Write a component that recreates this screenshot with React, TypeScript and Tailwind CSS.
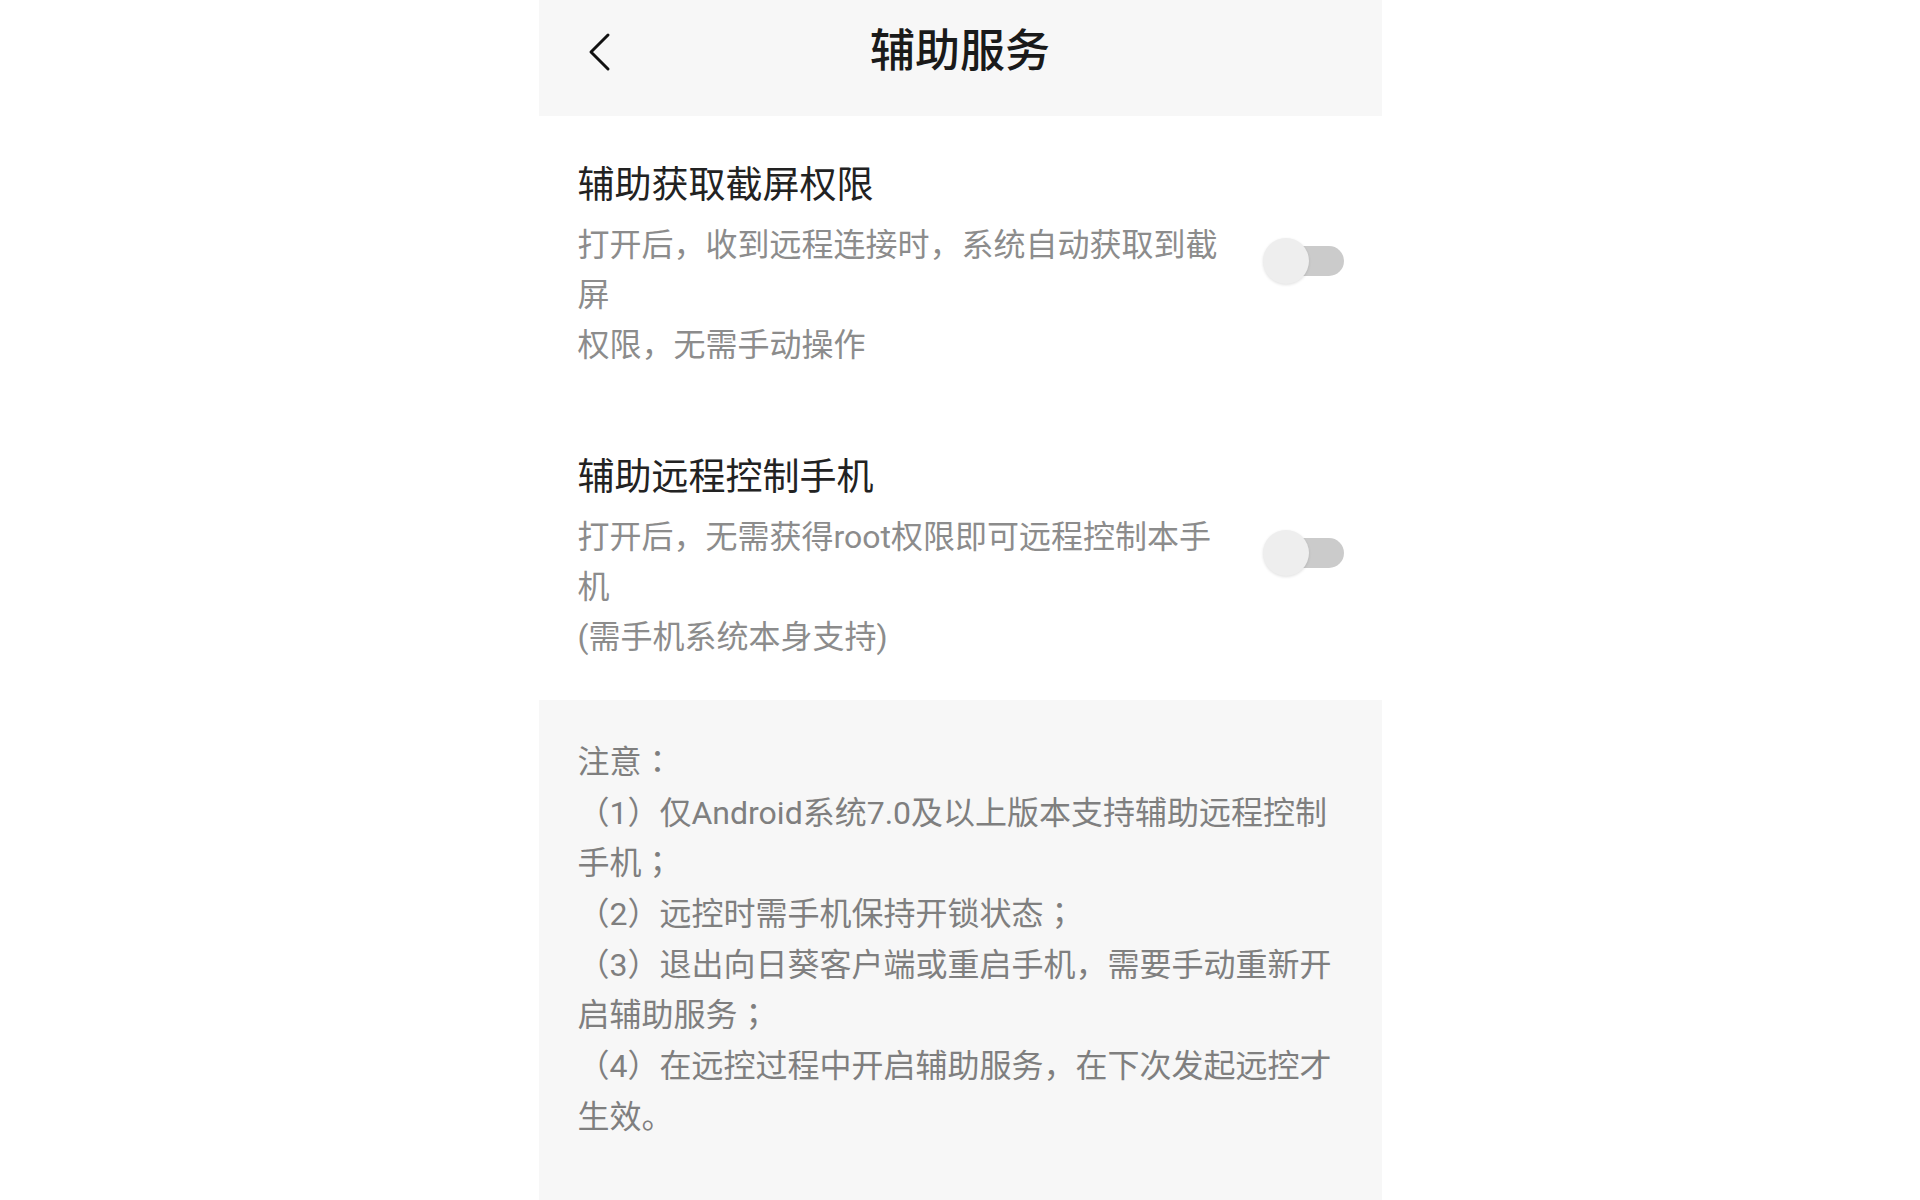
import React from "react";

// fullwidth colon / semicolon are drawn centred in their cell
function Punct({ text }: { text: string }) {
  const parts = text.split(/([：；])/);
  return (
    <>
      {parts.map((p, i) =>
        p === "：" || p === "；" ? (
          <span key={i} className="font-['Noto_Sans_CJK_JP',sans-serif] leading-none">{p}</span>
        ) : (
          <React.Fragment key={i}>{p}</React.Fragment>
        )
      )}
    </>
  );
}

function Toggle() {
  return (
    <div className="relative w-[81px] h-[46px] shrink-0 mb-[10px]">
      <div className="absolute right-0 top-[8px] h-[30px] w-[66px] rounded-full bg-[#cbcbcb]" />
      <div className="absolute left-0 top-0 h-[46px] w-[46px] rounded-full bg-[#eeeeee] shadow-[0_1px_3px_rgba(0,0,0,0.12)]" />
    </div>
  );
}

function SettingRow({ title, lines, className }: { title: string; lines: string[]; className: string }) {
  return (
    <div className={`flex items-center justify-between pl-[39px] pr-[38px] ${className}`}>
      <div className="flex flex-col">
        <div className="text-[37px] leading-[48px] text-[#222222]">{title}</div>
        <div className="mt-[10px] text-[32px] leading-[50px] text-[#8c8c8c]">
          {lines.map((l, i) => (
            <div key={i} className="whitespace-nowrap">{l}</div>
          ))}
        </div>
      </div>
      <Toggle />
    </div>
  );
}

const notes = [
  "注意：",
  "（1）仅Android系统7.0及以上版本支持辅助远程控制",
  "手机；",
  "（2）远控时需手机保持开锁状态；",
  "（3）退出向日葵客户端或重启手机，需要手动重新开",
  "启辅助服务；",
  "（4）在远控过程中开启辅助服务，在下次发起远控才",
  "生效。",
];

export default function App() {
  return (
    <div className="w-full h-[1200px] bg-white flex justify-center font-['Roboto','Noto_Sans_CJK_SC',sans-serif]">
      <div className="w-[843px] h-full flex flex-col bg-white">
        {/* top bar */}
        <div className="h-[116px] shrink-0 bg-[#f7f7f7] grid grid-cols-[1fr_auto_1fr] items-center pb-[12px]">
          <div className="pl-[48px] flex items-center">
            <svg width="24" height="40" viewBox="0 0 24 40" fill="none">
              <path d="M21 3 L4 20 L21 37" stroke="#111111" strokeWidth="3" strokeLinecap="round" strokeLinejoin="round" />
            </svg>
          </div>
          <div className="text-[45px] leading-[60px] font-medium text-[#1a1a1a]">辅助服务</div>
          <div />
        </div>

        <SettingRow
          className="pt-[46px] pb-[42px]"
          title="辅助获取截屏权限"
          lines={["打开后，收到远程连接时，系统自动获取到截", "屏", "权限，无需手动操作"]}
        />
        <SettingRow
          className="pt-[42px] pb-[38px]"
          title="辅助远程控制手机"
          lines={["打开后，无需获得root权限即可远程控制本手", "机", "(需手机系统本身支持)"]}
        />

        {/* notice */}
        <div className="flex-1 bg-[#f7f7f7] pl-[39px] pr-[38px] pt-[37px] text-[32px] leading-[50.7px] text-[#7f7f7f]">
          {notes.map((n, i) => (
            <div key={i} className="h-[50.7px] whitespace-nowrap">
              <Punct text={n} />
            </div>
          ))}
        </div>
      </div>
    </div>
  );
}
